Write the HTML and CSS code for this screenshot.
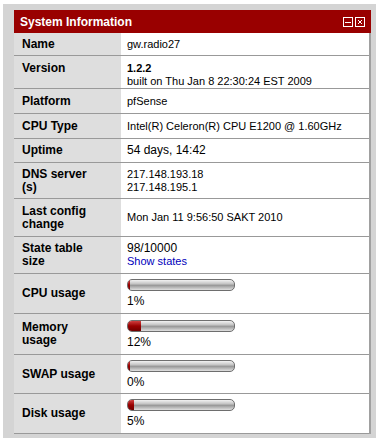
FILE: index.html
```html
<!DOCTYPE html>
<html lang="en">

<head>
    <meta charset="UTF-8">
    <title>System Information</title>
    <link rel="stylesheet" href="styles.css">
</head>

<body>

    <div class="widget">
        <div class="widget-header">
            <span class="widget-title">System Information</span>
            <span class="widget-buttons">
                <span class="widget-btn">
                    <svg width="10" height="10" viewBox="0 0 10 10"><rect x="0.5" y="0.5" width="9" height="9" fill="none" stroke="#fff"/><line x1="2" y1="5.5" x2="8" y2="5.5" stroke="#fff"/></svg>
                </span>
                <span class="widget-btn">
                    <svg width="10" height="10" viewBox="0 0 10 10"><rect x="0.5" y="0.5" width="9" height="9" fill="none" stroke="#fff"/><path d="M3 3 L7 7 M7 3 L3 7" stroke="#fff"/></svg>
                </span>
            </span>
        </div>

        <table class="info-table">
            <tr class="row h23">
                <td class="label">Name</td>
                <td class="value">gw.radio27</td>
            </tr>
            <tr class="row h32 row-top">
                <td class="label">Version</td>
                <td class="value"><strong>1.2.2</strong><br>built on Thu Jan 8 22:30:24 EST 2009</td>
            </tr>
            <tr class="row h25">
                <td class="label">Platform</td>
                <td class="value">pfSense</td>
            </tr>
            <tr class="row h25">
                <td class="label">CPU Type</td>
                <td class="value">Intel(R) Celeron(R) CPU E1200 @ 1.60GHz</td>
            </tr>
            <tr class="row h24">
                <td class="label">Uptime</td>
                <td class="value big">54 days, 14:42</td>
            </tr>
            <tr class="row h36">
                <td class="label">DNS server<br>(s)</td>
                <td class="value">217.148.193.18<br>217.148.195.1</td>
            </tr>
            <tr class="row h38">
                <td class="label">Last config<br>change</td>
                <td class="value">Mon Jan 11 9:56:50 SAKT 2010</td>
            </tr>
            <tr class="row h37">
                <td class="label">State table<br>size</td>
                <td class="value"><span class="big">98/10000</span><br><a href="#" class="link">Show states</a></td>
            </tr>
            <tr class="row h40">
                <td class="label">CPU usage</td>
                <td class="value">
                    <div class="bar"><div class="bar-fill" style="width: 2px;"></div></div>
                    <div class="pct">1%</div>
                </td>
            </tr>
            <tr class="row h41">
                <td class="label">Memory<br>usage</td>
                <td class="value">
                    <div class="bar"><div class="bar-fill" style="width: 13px;"></div></div>
                    <div class="pct">12%</div>
                </td>
            </tr>
            <tr class="row h39">
                <td class="label">SWAP usage</td>
                <td class="value">
                    <div class="bar"><div class="bar-fill" style="width: 2px;"></div></div>
                    <div class="pct">0%</div>
                </td>
            </tr>
            <tr class="row h40">
                <td class="label">Disk usage</td>
                <td class="value">
                    <div class="bar"><div class="bar-fill" style="width: 6px;"></div></div>
                    <div class="pct">5%</div>
                </td>
            </tr>
        </table>
    </div>

</body>

</html>
```

FILE: styles.css
```css
body {
    font-family: 'Liberation Sans', Arial, sans-serif;
    margin: 0;
    padding: 4px 5px 0 3px;
    background-color: #ffffff;
}

.widget {
    background-color: #d4d4d4;
    padding: 6px 5px 4px 11px;
}

.widget-header {
    background-color: #990000;
    color: #fff;
    height: 23px;
    display: flex;
    align-items: center;
    justify-content: space-between;
    padding: 0 6px 0 6px;
}

.widget-title {
    font-size: 12px;
    font-weight: bold;
}

.widget-buttons {
    display: flex;
    gap: 2px;
}

.widget-btn {
    display: block;
    width: 10px;
    height: 10px;
}

.widget-btn svg {
    display: block;
}

.info-table {
    width: 100%;
    border-collapse: separate;
    border-spacing: 0;
    background-color: #fff;
    border-right: 2px solid #a0a0a0;
}

.info-table td {
    box-sizing: border-box;
    border-bottom: 1px solid #999;
    vertical-align: middle;
    padding-top: 0;
    padding-bottom: 0;
}

.h23 td { height: 23px; }
.h24 td { height: 24px; }
.h25 td { height: 25px; }
.h32 td { height: 32px; }
.h36 td { height: 36px; }
.h37 td { height: 37px; }
.h38 td { height: 38px; }
.h39 td { height: 39px; }
.h40 td { height: 40px; }
.h41 td { height: 41px; }

.label {
    width: 107px;
    background-color: #dedede;
    font-size: 12px;
    font-weight: bold;
    line-height: 13px;
    padding-left: 8px;
    color: #000;
}

.value {
    font-size: 11px;
    line-height: 13px;
    padding-left: 6px;
    color: #000;
}

.row-top td {
    vertical-align: top;
    padding-top: 6px;
}

.big {
    font-size: 12px;
}

.link {
    color: #0000bb;
    text-decoration: none;
}

.bar {
    width: 106px;
    height: 10px;
    border: 1px solid #6e6e6e;
    border-radius: 5px;
    background: linear-gradient(#f2f2f2, #c8c8c8 35%, #9a9a9a 55%, #c0c0c0 80%, #e0e0e0);
    overflow: hidden;
    margin-bottom: 3px;
}

.bar-fill {
    height: 100%;
    background: linear-gradient(#d04040, #990000 50%, #700000);
}

.pct {
    font-size: 12px;
    line-height: 14px;
}
```
